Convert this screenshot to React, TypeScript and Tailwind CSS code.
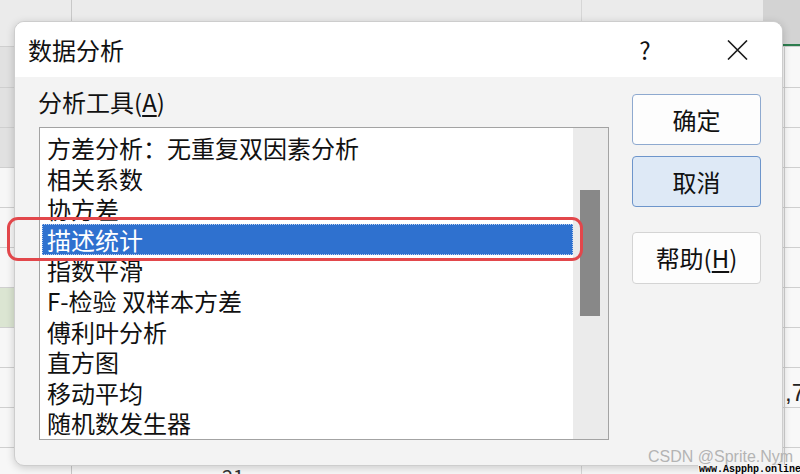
import React from "react";

const items = [
  "方差分析：无重复双因素分析",
  "相关系数",
  "协方差",
  "描述统计",
  "指数平滑",
  "F-检验 双样本方差",
  "傅利叶分析",
  "直方图",
  "移动平均",
  "随机数发生器",
];

const rowHeights = [47, 41, 40, 40, 40, 40, 40, 40, 40, 40, 40, 40];

function BgRow({ i, h }: { i: number; h: number }) {
  const leftBg =
    i === 0
      ? "bg-[#ebebeb]"
      : i >= 1 && i <= 3
      ? "bg-[#e1e1e1]"
      : i === 7
      ? "bg-[#dbe5d2]"
      : "bg-[#f7f7f7]";
  const midBg = i === 0 ? "bg-[#ebebeb]" : "bg-[#f7f7f7]";
  return (
    <div className="flex shrink-0 border-b border-[#cfcfcf]" style={{ height: h }}>
      <div className={`w-[72px] shrink-0 border-r border-[#c8c8c8] ${leftBg}`} />
      <div className={`w-[510px] shrink-0 border-r border-[#d6d6d6] ${midBg} pl-[150px] pt-[19px] text-[20px] leading-none text-[#333]`}>
        {i === 11 ? "21" : ""}
      </div>
      <div className={`w-[181px] shrink-0 ${midBg}`} />
      {i === 0 ? (
        <div className="w-[37px] shrink-0 bg-[#d3d3d3] border-b-2 border-[#2e7d4f]" />
      ) : (
        <>
          <div className="w-[22px] shrink-0 border-r border-[#cfcfcf] bg-[#f8f8f8]" />
          <div
            className="w-[15px] shrink-0 bg-[#f8f8f8] overflow-hidden pt-[13px] text-[24px] leading-none text-[#222] whitespace-nowrap"
            style={{ fontFamily: '"Liberation Sans", Arial, sans-serif' }}
          >
            {i === 9 ? ",7" : ""}
          </div>
        </>
      )}
    </div>
  );
}

export default function App() {
  return (
    <div
      className="relative w-[800px] h-[474px] overflow-hidden bg-[#f4f4f4] flex flex-col"
      style={{ fontFamily: '"Noto Sans CJK SC", "Noto Sans", sans-serif' }}
    >
      {rowHeights.map((h, i) => (
        <BgRow key={i} i={i} h={h} />
      ))}

      {/* Dialog window */}
      <div className="absolute left-[14px] top-[21px] w-[769px] h-[445px] rounded-[10px] border border-[#cdcdcd] bg-[#f3f3f3] overflow-hidden flex flex-col shadow-[0_2px_8px_rgba(0,0,0,0.18)]">
        {/* Title bar */}
        <div className="h-[55px] shrink-0 bg-white flex items-center pl-[13px] text-[#111]">
          <span className="text-[24px] leading-none">数据分析</span>
          <span className="ml-auto w-[40px] text-center text-[24px] leading-none">?</span>
          <span className="ml-[49px] mr-[22px] w-[46px] flex items-center justify-center">
            <svg width="21" height="20" viewBox="0 0 21 20">
              <path d="M1 0.5 L20 19.5 M20 0.5 L1 19.5" stroke="#1a1a1a" strokeWidth="1.6" fill="none" />
            </svg>
          </span>
        </div>

        {/* Body */}
        <div className="flex-1 flex">
          <div className="flex flex-col pl-[24px]">
            <div className="h-[50px] flex items-center -ml-px text-[24px] leading-none text-[#111]">
              分析工具(<span className="underline underline-offset-[3px]">A</span>)
            </div>
            <div className="w-[570px] h-[313px] border border-[#a3a3a3] bg-white flex">
              <div className="flex-1 pt-[4.7px]">
                {items.map((t, i) =>
                  i === 3 ? (
                    <div
                      key={t}
                      className="h-[30.6px] ml-[2px] pl-[4px] flex items-center bg-[#2f71cf] border border-dotted border-[#b9cdee] text-white text-[24px] leading-none whitespace-nowrap"
                    >
                      {t}
                    </div>
                  ) : (
                    <div
                      key={t}
                      className="h-[30.6px] pl-[7px] flex items-center text-[#111] text-[24px] leading-none whitespace-nowrap"
                    >
                      {t}
                    </div>
                  )
                )}
              </div>
              <div className="w-[35px] bg-[#ebebeb] pt-[62px] pl-[7px]">
                <div className="w-[20px] h-[126px] bg-[#888888]" />
              </div>
            </div>
          </div>

          <div className="ml-[23px] pt-[17px] flex flex-col">
            <div className="w-[129px] h-[51px] rounded-[4px] border border-[#8ea9cf] bg-[#fdfdfd] flex items-center justify-center text-[24px] leading-none text-[#111]">
              确定
            </div>
            <div className="mt-[11px] w-[129px] h-[51px] rounded-[4px] border border-[#6d95cb] bg-[#dee9f6] flex items-center justify-center text-[24px] leading-none text-[#111]">
              取消
            </div>
            <div className="mt-[25px] w-[129px] h-[52px] rounded-[4px] border border-[#d4d4d4] bg-[#fdfdfd] flex items-center justify-center text-[24px] leading-none text-[#111]">
              帮助(<span className="underline underline-offset-[3px]">H</span>)
            </div>
          </div>
        </div>
      </div>

      {/* Red highlight annotation */}
      <div className="absolute left-[7px] top-[217px] w-[576px] h-[44px] rounded-[11px] border-[3.5px] border-[#e2474b]" />

      {/* Watermarks */}
      <div
        className="absolute left-[648px] top-[449px] text-[16px] leading-none text-[#b4b4b4] whitespace-nowrap"
        style={{ fontFamily: '"Liberation Sans", Arial, sans-serif' }}
      >
        CSDN @Sprite.Nym
      </div>
      <div
        className="absolute left-[698px] top-[465px] pl-[1px] text-[10px] leading-[9px] font-bold text-black bg-[#f3f3f3] whitespace-nowrap"
        style={{ fontFamily: '"Liberation Mono", monospace' }}
      >
        www.Aspphp.online
      </div>
    </div>
  );
}
